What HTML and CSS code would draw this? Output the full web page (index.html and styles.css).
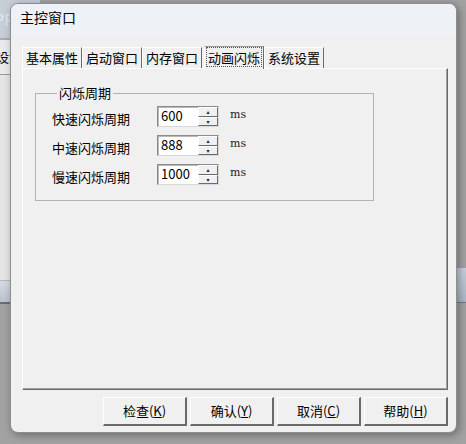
FILE: index.html
```html
<!DOCTYPE html>
<html lang="zh-CN">
<head>
    <meta charset="UTF-8">
    <title>主控窗口</title>
    <link rel="stylesheet" href="styles.css">
</head>
<body>
    <!-- windows behind the dialog -->
    <div class="back-left">
        <div class="bl-top">PP</div>
        <div class="bl-tool">设计</div>
        <div class="bl-body"></div>
        <div class="bl-bar"></div>
    </div>
    <div class="back-right"></div>

    <div class="dialog">
        <div class="titlebar">主控窗口</div>
        <div class="content">
            <div class="tabs">
                <div class="tab">基本属性</div>
                <div class="tab">启动窗口</div>
                <div class="tab">内存窗口</div>
                <div class="tab active"><span>动画闪烁</span></div>
                <div class="tab">系统设置</div>
            </div>
            <div class="panel">
                <fieldset class="group">
                    <legend>闪烁周期</legend>
                    <div class="row">
                        <span class="label">快速闪烁周期</span>
                        <div class="spin"><div class="spin-text">600</div><div class="spin-btns"><div class="sb">▴</div><div class="sb">▾</div></div></div>
                        <span class="unit">ms</span>
                    </div>
                    <div class="row">
                        <span class="label">中速闪烁周期</span>
                        <div class="spin"><div class="spin-text">888</div><div class="spin-btns"><div class="sb">▴</div><div class="sb">▾</div></div></div>
                        <span class="unit">ms</span>
                    </div>
                    <div class="row">
                        <span class="label">慢速闪烁周期</span>
                        <div class="spin"><div class="spin-text">1000</div><div class="spin-btns"><div class="sb">▴</div><div class="sb">▾</div></div></div>
                        <span class="unit">ms</span>
                    </div>
                </fieldset>
            </div>
            <div class="buttons">
                <div class="btn">检查(<u>K</u>)</div>
                <div class="btn">确认(<u>Y</u>)</div>
                <div class="btn">取消(<u>C</u>)</div>
                <div class="btn">帮助(<u>H</u>)</div>
            </div>
        </div>
    </div>
</body>
</html>
```
FILE: styles.css
```css
body {
    margin: 0;
    width: 466px;
    height: 444px;
    overflow: hidden;
    position: relative;
    background: #a2a2a2;
    font-family: "Noto Sans CJK SC", "DejaVu Sans", sans-serif;
    font-size: 13px;
    color: #000;
}

/* background windows */
.back-left {
    position: absolute;
    left: 0;
    top: 0;
    width: 40px;
    display: flex;
    flex-direction: column;
}
.bl-top {
    height: 38px;
    background: #c6ced8;
    color: #e4e8ee;
    font-size: 16px;
    line-height: 38px;
    text-indent: -6px;
    border-bottom: 2px solid #a8acb2;
}
.bl-tool {
    height: 34px;
    background: #ebebeb;
    line-height: 34px;
    font-size: 13px;
    text-indent: -4px;
    border-bottom: 1px solid #9a9a9a;
}
.bl-body {
    height: 205px;
    background: #e6e6e6;
    border-bottom: 1px solid #b8b8b8;
}
.bl-bar {
    height: 21px;
    background: linear-gradient(#d6dbe2, #b9c3cf);
    border-bottom: 2px solid #6c6c6c;
}
.back-right {
    position: absolute;
    right: 0;
    top: 268px;
    width: 12px;
    height: 34px;
    background: linear-gradient(#c6d0dc, #aab6c4);
    border-bottom: 1px solid #7a7a7a;
}

/* dialog */
.dialog {
    position: absolute;
    left: 10px;
    top: 3px;
    width: 447px;
    height: 430px;
    box-sizing: border-box;
    border: 1px solid #8e8e8e;
    border-radius: 8px;
    background: #f0f0f0;
    box-shadow: 2px 2px 8px rgba(0, 0, 0, 0.35);
    display: flex;
    flex-direction: column;
    overflow: hidden;
}
.titlebar {
    height: 32px;
    background: #eef2f7;
    font-size: 14px;
    line-height: 27px;
    padding-left: 9px;
}
.content {
    flex: 1;
    display: flex;
    flex-direction: column;
    padding: 10px 8px 6px 11px;
}

/* tabs */
.tabs {
    display: flex;
    align-items: flex-end;
    height: 23px;
    position: relative;
    z-index: 1;
}
.tab {
    height: 20px;
    line-height: 20px;
    padding: 0 3px;
    border-left: 1px solid #ffffff;
    border-top: 1px solid #ffffff;
    border-right: 1px solid #6b6b6b;
}
.tab.active {
    height: 22px;
    margin-left: 2px;
    margin-bottom: -1px;
    padding: 0 1px;
    background: #f0f0f0;
    border-top: 1px solid #9a9a9a;
}
.tab.active span {
    display: block;
    height: 20px;
    line-height: 19px;
    padding: 0 1px;
    border: 1px dotted #555;
    box-sizing: border-box;
}

/* panel */
.panel {
    height: 322px;
    box-sizing: border-box;
    border-top: 1px solid #ffffff;
    border-left: 1px solid #ffffff;
    border-right: 1px solid #6a6a6a;
    border-bottom: 1px solid #6a6a6a;
    box-shadow: inset -1px -1px 0 #a0a0a0;
    padding: 15px 0 0 12px;
}
.group {
    width: 339px;
    height: 117px;
    box-sizing: border-box;
    margin: 0;
    padding: 0 0 0 16px;
    border: 1px solid #b2b2b2;
}
.group legend {
    margin-left: 5px;
    padding: 0 2px;
    line-height: 18px;
}
.row {
    display: flex;
    align-items: center;
    height: 29px;
}
.label {
    width: 105px;
    padding-top: 3px;
}
.spin {
    display: flex;
    width: 62px;
    height: 21px;
    box-sizing: border-box;
    border: 1px solid #8a8a8a;
    border-right-color: #d8d8d8;
    border-bottom-color: #d8d8d8;
    box-shadow: inset 1px 1px 0 #b8b8b8;
}
.spin-text {
    flex: 1;
    background: #fff;
    line-height: 16px;
    padding-left: 2px;
    margin: 1px 0 0 1px;
}
.spin-btns {
    width: 20px;
    display: flex;
    flex-direction: column;
}
.sb {
    flex: 1;
    box-sizing: border-box;
    border: 1px solid #fff;
    border-right-color: #6a6a6a;
    border-bottom-color: #6a6a6a;
    background: #f0f0f0;
    font-size: 6px;
    line-height: 7px;
    text-align: center;
    color: #222;
}
.unit {
    margin-left: 11px;
    margin-top: -4px;
    font-family: "DejaVu Serif", serif;
    font-size: 11px;
    color: #222;
}

/* bottom buttons */
.buttons {
    display: flex;
    justify-content: flex-end;
    gap: 3px;
    margin-top: 7px;
}
.btn {
    width: 84px;
    height: 29px;
    box-sizing: border-box;
    border: 1px solid #fff;
    border-right: 2px solid #6a6a6a;
    border-bottom: 2px solid #6a6a6a;
    background: #f0f0f0;
    text-align: center;
    line-height: 26px;
}
```
